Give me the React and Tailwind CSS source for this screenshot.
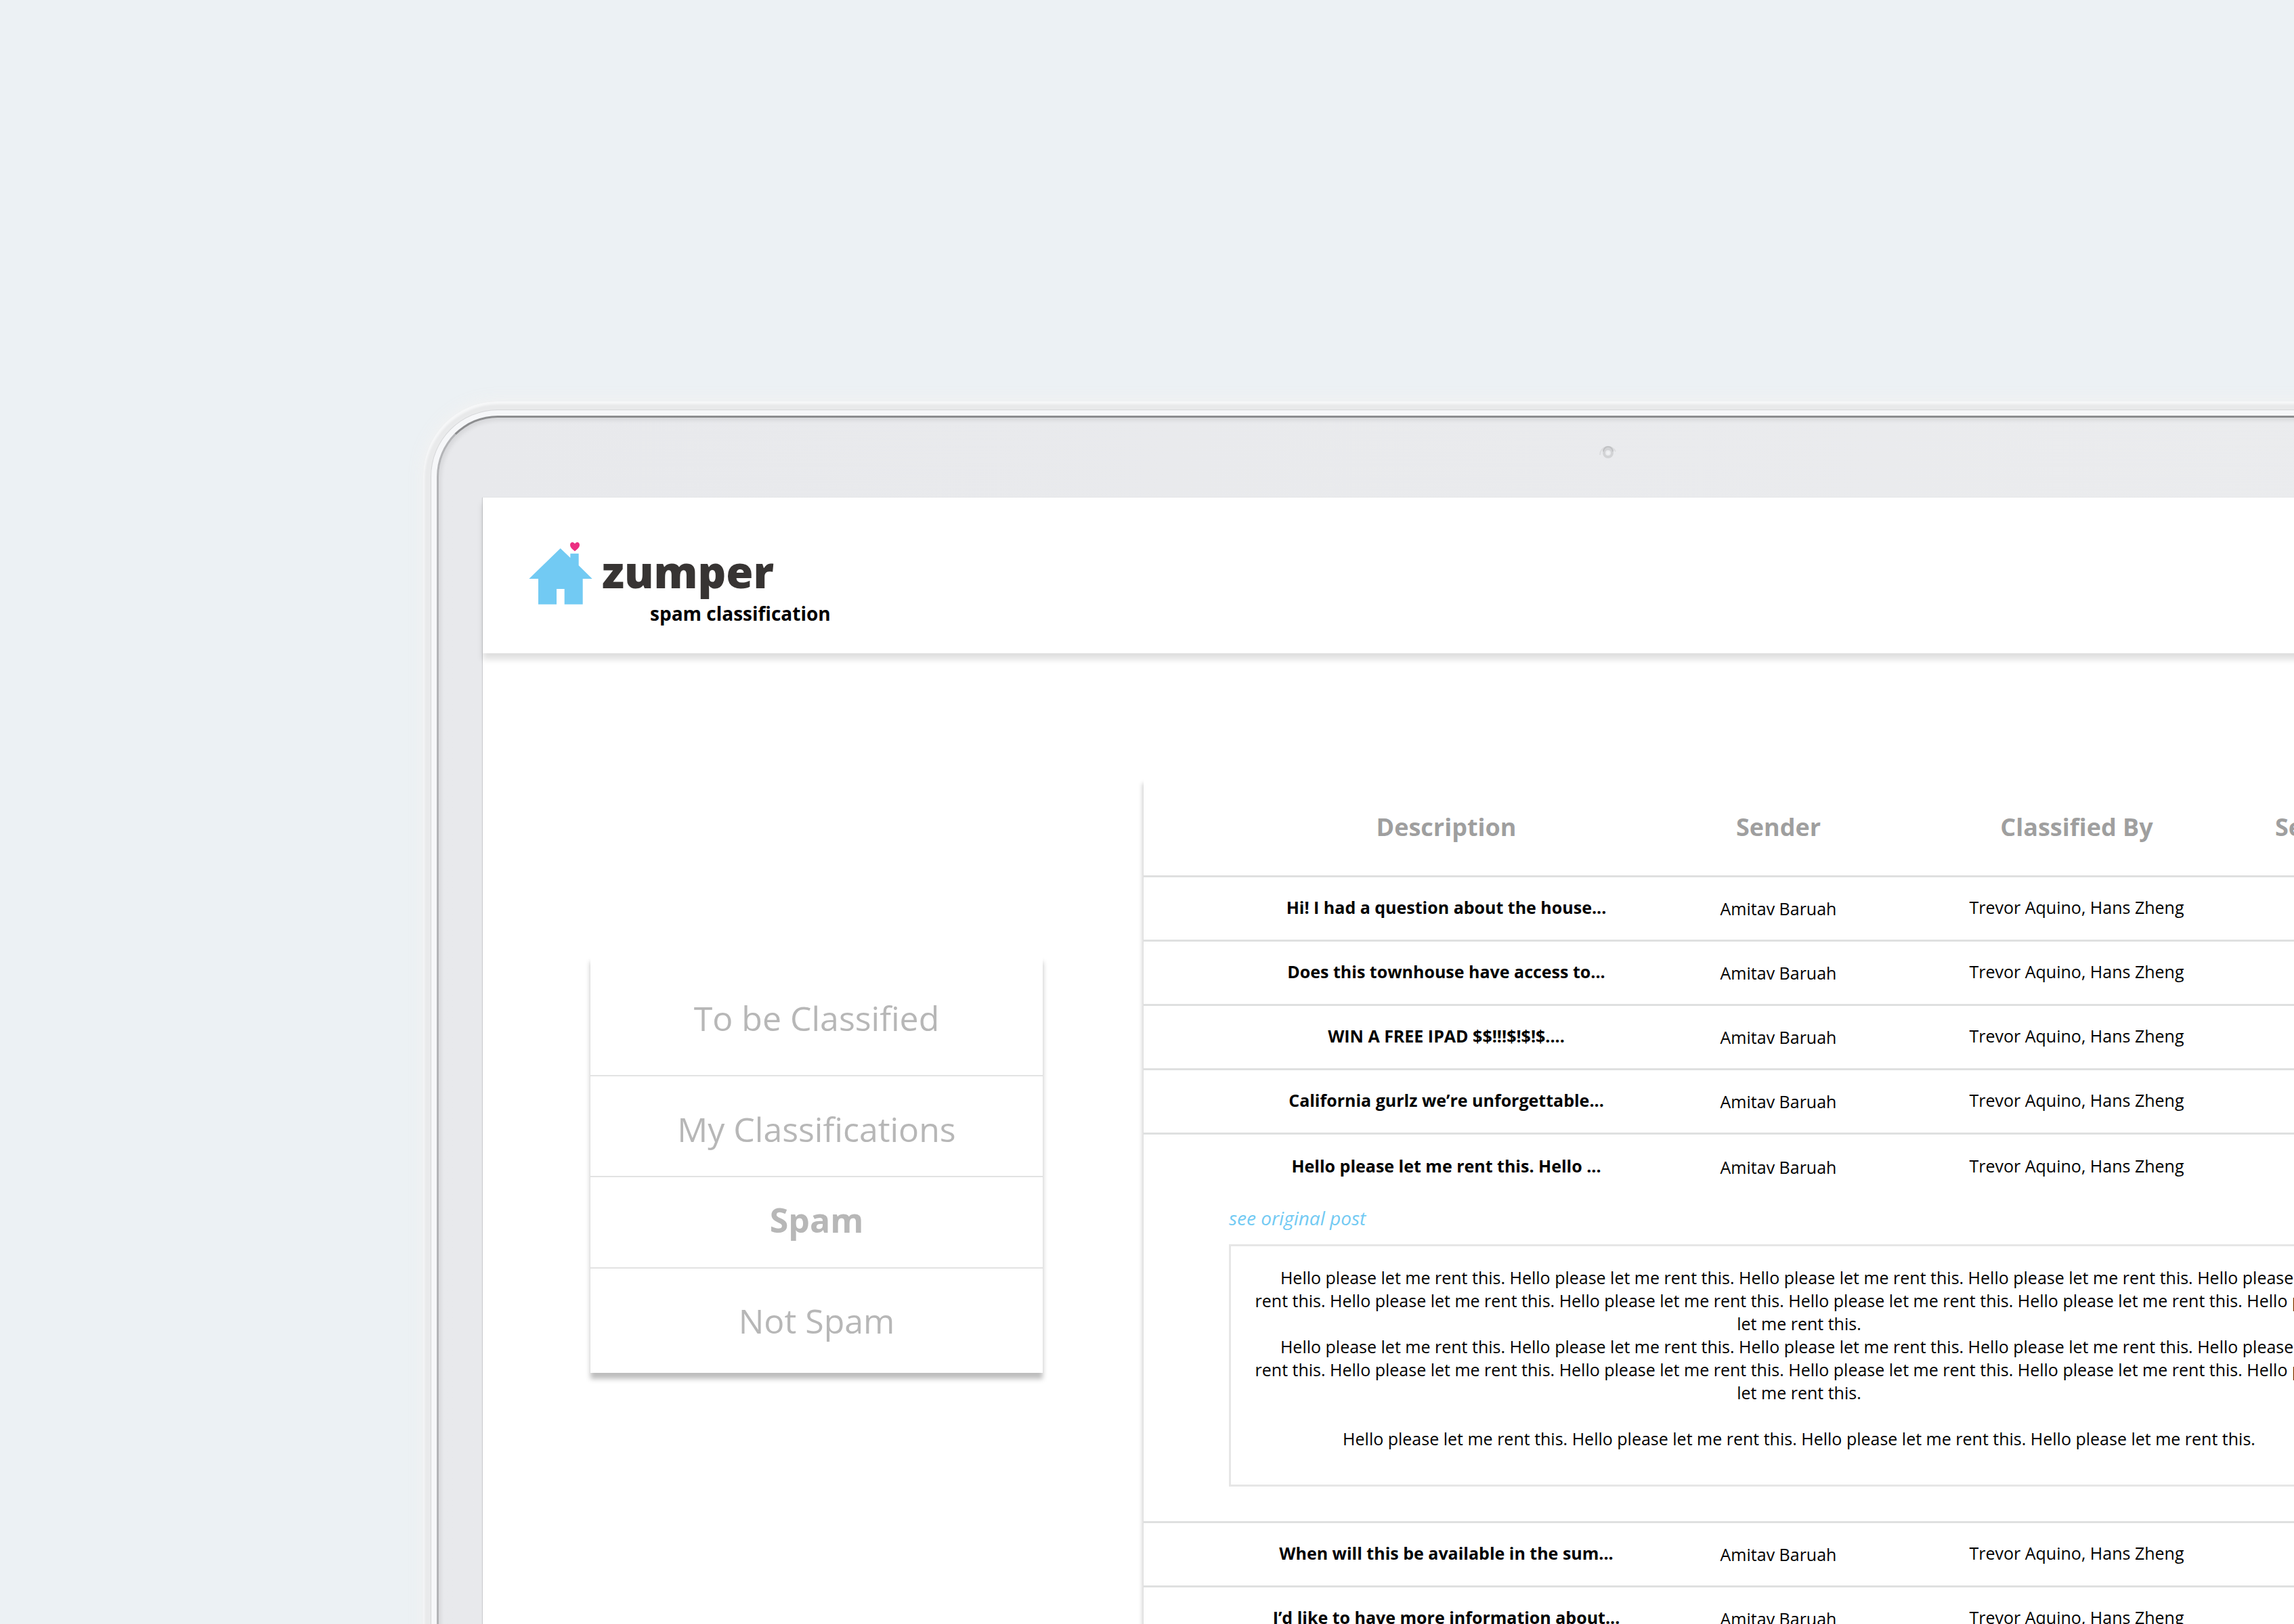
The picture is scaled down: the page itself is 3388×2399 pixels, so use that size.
import React from "react";

const NAV = [
  { label: "To be Classified", className: "h-[178px] pt-2 border-b-2" },
  { label: "My Classifications", className: "h-[149px] pt-2 border-b-2" },
  { label: "Spam", active: true, className: "h-[135px] pb-2 border-b-2" },
  { label: "Not Spam", className: "h-[154px]" },
];

const SENTENCE = "Hello please let me rent this.";

const LONG_PARAGRAPH = [
  `${SENTENCE} ${SENTENCE} ${SENTENCE} ${SENTENCE} Hello please let`,
  `rent this. ${SENTENCE} ${SENTENCE} ${SENTENCE} ${SENTENCE} Hello please`,
  "let me rent this.",
];

const MESSAGES = [
  { title: "Hi! I had a question about the house..." },
  { title: "Does this townhouse have access to..." },
  { title: "WIN A FREE IPAD $$!!!$!$!$...." },
  { title: "California gurlz we’re unforgettable..." },
  { title: "Hello please let me rent this. Hello ...", open: true },
  { title: "When will this be available in the sum..." },
  { title: "I’d like to have more information about..." },
];

function HouseLogo() {
  return (
    <svg viewBox="0 0 280 276" className="h-[92px] w-[94px] shrink-0" aria-hidden="true">
      <path
        fill="#72caf3"
        d="M139 27 183 69V50H220V103L280 162H238V275H157V207H122V275H41V162H0Z"
      />
      <path
        fill="#ec2f82"
        d="M203 40C196 33 182 25 182 12C182 4 187 0 192 0C197 0 201 3 203 7C205 3 209 0 214 0C219 0 224 4 224 12C224 25 210 33 203 40Z"
      />
    </svg>
  );
}

function Camera() {
  return (
    <svg viewBox="0 0 28 28" className="size-7" fill="none" aria-hidden="true">
      <path d="M2 17A12 12 0 0 1 25 12" stroke="#dcdddf" strokeWidth="2" />
      <circle cx="14" cy="14" r="6" stroke="#d2d3d5" strokeWidth="4" />
      <path d="M7 12A7 7 0 0 1 21 12" stroke="#c0c1c3" strokeWidth="2" />
      <circle cx="14" cy="14" r="2" fill="#f1f2f3" />
    </svg>
  );
}

function Header() {
  return (
    <header className="relative flex h-[230px] items-start bg-white pt-[66px] pl-[68px] shadow-[0_9px_9px_rgba(0,0,0,0.13)]">
      <HouseLogo />
      <div className="ml-[14px] pt-[10px]">
        <h1 className="text-[65px] leading-[66px] font-extrabold text-[#373433]">zumper</h1>
        <p className="mt-[15px] ml-[71px] text-[28px] leading-none font-bold text-black">
          spam classification
        </p>
      </div>
    </header>
  );
}

function SideNav() {
  return (
    <nav className="mt-[262px] flex w-[668px] shrink-0 flex-col bg-white shadow-[0_9px_7px_rgba(0,0,0,0.26)]">
      {NAV.map((item) => (
        <button
          key={item.label}
          type="button"
          className={`${item.className} ${item.active ? "font-bold" : ""} border-[#e2e3e3] text-center text-[50px] leading-none text-[#b7b7b7]`}
        >
          {item.label}
        </button>
      ))}
    </nav>
  );
}

function MessageDetail() {
  return (
    <tr>
      <td colSpan={5} className="border-b-[3px] border-[#dfe0e0] px-[126px] pt-2 pb-[51px]">
        <a href="#post" className="block text-[28px] leading-10 text-[#72caf3] italic">
          see original post
        </a>
        <div className="mt-[19px] border-[3px] border-[#e6e6e6] pt-[29px] pb-[51px] text-center leading-[34px] whitespace-nowrap">
          {[0, 1].map((n) => (
            <p key={n}>
              {LONG_PARAGRAPH.map((line) => (
                <span key={line} className="block">
                  {line}
                </span>
              ))}
            </p>
          ))}
          <p className="mt-[34px]">
            {SENTENCE} {SENTENCE} {SENTENCE} {SENTENCE}
          </p>
        </div>
      </td>
    </tr>
  );
}

function MessageTable() {
  return (
    <section className="min-w-0 flex-1 bg-white shadow-[-2px_7px_6px_rgba(0,0,0,0.18)]">
      <table className="w-full table-fixed border-separate border-spacing-0 text-[25px] text-black">
        <colgroup>
          <col className="w-[127px]" />
          <col className="w-[640px]" />
          <col className="w-[341px]" />
          <col className="w-[540px]" />
          <col />
        </colgroup>
        <thead>
          <tr className="h-[146px] text-[36px] leading-none text-[#9f9f9f] *:border-b-[3px] *:border-[#dfe0e0]">
            <td />
            <th className="font-bold">Description</th>
            <th className="font-bold">Sender</th>
            <th className="font-bold">Classified By</th>
            <th className="pl-[23px] text-left font-bold">Sent</th>
          </tr>
        </thead>
        <tbody>
          {MESSAGES.map((m) => (
            <React.Fragment key={m.title}>
              <tr
                className={`${m.open ? "" : "*:border-b-[3px]"} h-[95px] text-center leading-8 *:border-[#dfe0e0]`}
              >
                <td />
                <td className="pb-1 font-bold">{m.title}</td>
                <td>Amitav Baruah</td>
                <td className="pb-1">Trevor Aquino, Hans Zheng</td>
                <td />
              </tr>
              {m.open && <MessageDetail />}
            </React.Fragment>
          ))}
        </tbody>
      </table>
    </section>
  );
}

export default function App() {
  return (
    <div className="h-screen overflow-hidden bg-[#ecf1f4] pt-[593px] pl-[625px] font-['Open_Sans','Noto_Sans',sans-serif]">
      {/* Laptop lid: outer rim, bright inner rim, then the bezel */}
      <div className="-mr-[400px] rounded-t-[110px] bg-[#e9eaeb] pt-3 pl-[11px] shadow-[0_0_24px_rgba(244,242,241,0.9),inset_2px_4px_3px_#f6f7f8,inset_0_11px_0_#e8e9ea]">
        <div className="rounded-t-[99px] border-t border-l border-[#d6d7d9] bg-[#f6f7f9] pt-2 pl-2">
          <div className="rounded-t-[90px] border-t-[3px] border-l-[3px] border-t-[#8c8d8f] border-l-[#b3b4b7] bg-linear-to-r from-[#e8e9ec] to-[#ebecee] pr-[88px] shadow-[inset_3px_4px_6px_rgba(0,0,0,0.08)]">
            <div className="h-[118px] pt-[38px] pl-[1713px]">
              <Camera />
            </div>
            <div className="ml-[65px] bg-white shadow-[-1px_0_1px_rgba(0,0,0,0.12)]">
              <Header />
              <main className="flex items-start gap-[149px] pt-[185px] pr-[75px] pl-[159px]">
                <SideNav />
                <MessageTable />
              </main>
            </div>
          </div>
        </div>
      </div>
    </div>
  );
}
